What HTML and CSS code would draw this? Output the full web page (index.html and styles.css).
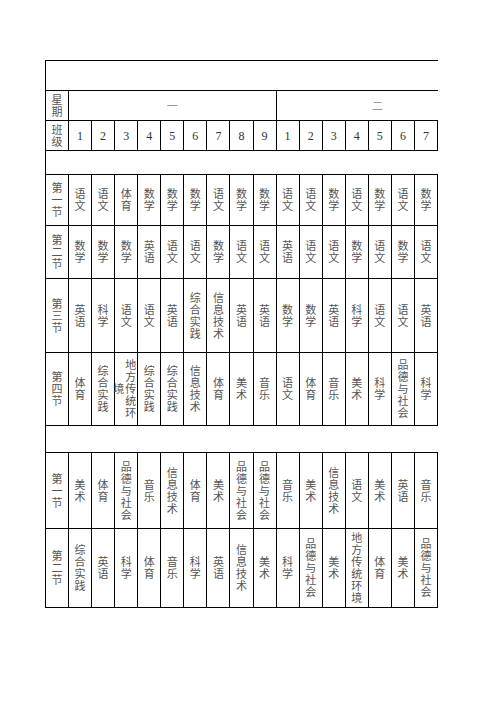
FILE: index.html
```html
<!DOCTYPE html>
<html lang="zh">
<head>
<meta charset="utf-8">
<title>课程表</title>
<link rel="stylesheet" href="styles.css">
</head>
<body>
<table class="sheet">
  <colgroup>
    <col class="c-label">
    <col><col><col><col><col><col><col><col><col>
    <col><col><col><col><col><col><col>
  </colgroup>
  <tbody>
    <tr class="r-title"><td class="open-right" colspan="17"></td></tr>
    <tr class="r-head">
      <td class="label">星期</td>
      <td class="day" colspan="9">一</td>
      <td class="day day-two open-right" colspan="7">二</td>
    </tr>
    <tr class="r-head">
      <td class="label">班级</td>
      <td class="num">1</td><td class="num">2</td><td class="num">3</td><td class="num">4</td><td class="num">5</td><td class="num">6</td><td class="num">7</td><td class="num">8</td><td class="num">9</td>
      <td class="num">1</td><td class="num">2</td><td class="num">3</td><td class="num">4</td><td class="num">5</td><td class="num">6</td><td class="num">7</td>
    </tr>
    <tr class="r-sep1"><td class="open-right" colspan="17"></td></tr>
    <tr class="r-m1">
      <td class="label">第一节</td>
      <td>语文</td><td>语文</td><td>体育</td><td>数学</td><td>数学</td><td>数学</td><td>语文</td><td>数学</td><td>数学</td>
      <td>语文</td><td>语文</td><td>数学</td><td>语文</td><td>数学</td><td>语文</td><td>数学</td>
    </tr>
    <tr class="r-m2">
      <td class="label">第二节</td>
      <td>数学</td><td>数学</td><td>数学</td><td>英语</td><td>语文</td><td>语文</td><td>数学</td><td>语文</td><td>语文</td>
      <td>英语</td><td>语文</td><td>语文</td><td>数学</td><td>语文</td><td>数学</td><td>语文</td>
    </tr>
    <tr class="r-m3">
      <td class="label">第三节</td>
      <td>英语</td><td>科学</td><td>语文</td><td>语文</td><td>英语</td><td>综合实践</td><td>信息技术</td><td>英语</td><td>英语</td>
      <td>数学</td><td>数学</td><td>英语</td><td>科学</td><td>语文</td><td>语文</td><td>英语</td>
    </tr>
    <tr class="r-m4">
      <td class="label">第四节</td>
      <td>体育</td><td>综合实践</td>
      <td class="split"><div class="split-box"><span class="split-tail">境</span><span class="split-stack">地方传统环</span></div></td>
      <td>综合实践</td><td>综合实践</td><td>信息技术</td><td>体育</td><td>美术</td><td>音乐</td>
      <td>语文</td><td>体育</td><td>音乐</td><td>美术</td><td>科学</td><td>品德与社会</td><td>科学</td>
    </tr>
    <tr class="r-sep2"><td class="open-right" colspan="17"></td></tr>
    <tr class="r-a1">
      <td class="label">第一节</td>
      <td>美术</td><td>体育</td><td>品德与社会</td><td>音乐</td><td>信息技术</td><td>体育</td><td>美术</td><td>品德与社会</td><td>品德与社会</td>
      <td>音乐</td><td>美术</td><td>信息技术</td><td>语文</td><td>美术</td><td>英语</td><td>音乐</td>
    </tr>
    <tr class="r-a2">
      <td class="label">第二节</td>
      <td>综合实践</td><td>英语</td><td>科学</td><td>体育</td><td>音乐</td><td>科学</td><td>英语</td><td>信息技术</td><td>美术</td>
      <td>科学</td><td>品德与社会</td><td>美术</td><td>地方传统环境</td><td>体育</td><td>美术</td><td>品德与社会</td>
    </tr>
  </tbody>
</table>
</body>
</html>
```

FILE: styles.css
```css
html, body {
  margin: 0;
  padding: 0;
  background: #ffffff;
}

body {
  font-family: "Liberation Serif", "Noto Sans CJK SC", serif;
  color: #555555;
}

.sheet {
  margin: 60px 0 0 45px;
  width: 393px;
  border-collapse: collapse;
  table-layout: fixed;
}

.c-label {
  width: 23px;
}

.sheet td {
  border: 1px solid #000;
  padding: 0 5px;
  font-size: 11px;
  line-height: 12px;
  text-align: center;
  vertical-align: middle;
  overflow: visible;
}

.sheet td.open-right {
  border-right: none;
}

.r-title { height: 30px; }
.r-head { height: 30px; }
.r-sep1 { height: 24px; }
.r-m1 { height: 51px; }
.r-m2 { height: 53px; }
.r-m3 { height: 74px; }
.r-m4 { height: 73px; }
.r-sep2 { height: 27px; }
.r-a1 { height: 76px; }
.r-a2 { height: 79px; }

.sheet td.num {
  font-size: 12px;
  color: #333;
}

.sheet td.day {
  color: #999;
  font-size: 11px;
}

.sheet td.day-two {
  padding-left: 46px;
}

.sheet td.split {
  padding: 0;
}

.split-box {
  display: flex;
  align-items: center;
  justify-content: flex-end;
  gap: 1px;
}

.split-tail {
  width: 11px;
}

.split-stack {
  width: 11px;
  margin-right: 1px;
}
```
